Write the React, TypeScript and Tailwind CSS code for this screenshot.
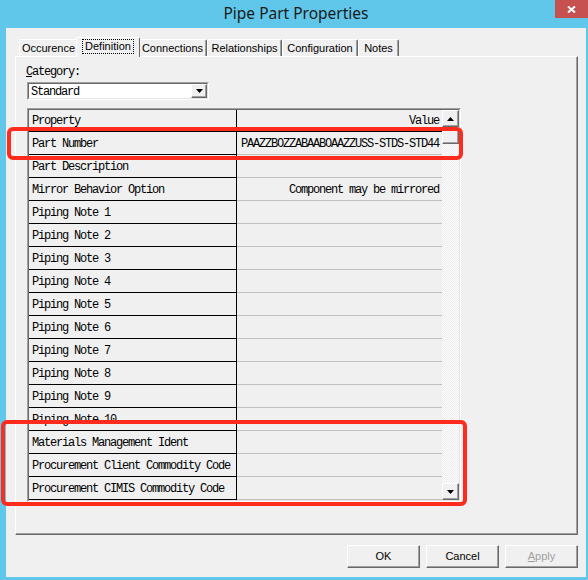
import React from 'react';

type PropRow = { name: string; value?: string };

const rows: PropRow[] = [
  { name: 'Part Number', value: 'PAAZZBOZZABAABOAAZZUSS-STDS-STD44' },
  { name: 'Part Description' },
  { name: 'Mirror Behavior Option', value: 'Component may be mirrored' },
  { name: 'Piping Note 1' },
  { name: 'Piping Note 2' },
  { name: 'Piping Note 3' },
  { name: 'Piping Note 4' },
  { name: 'Piping Note 5' },
  { name: 'Piping Note 6' },
  { name: 'Piping Note 7' },
  { name: 'Piping Note 8' },
  { name: 'Piping Note 9' },
  { name: 'Piping Note 10' },
  { name: 'Materials Management Ident' },
  { name: 'Procurement Client Commodity Code' },
  { name: 'Procurement CIMIS Commodity Code' },
  { name: '' },
];

const tabs = [
  { label: 'Occurence', w: 'w-[59px]' },
  { label: 'Definition', w: 'w-[64px]', active: true },
  { label: 'Connections', w: 'w-[69px]' },
  { label: 'Relationships', w: 'w-[75px]' },
  { label: 'Configuration', w: 'w-[76px]' },
  { label: 'Notes', w: 'w-[41px]' },
];

const ui = "font-['Liberation_Sans',Arial,sans-serif] text-[11px]";
const mono = "font-['Liberation_Mono','Courier_New',monospace] text-[12px] tracking-[-1.2px]";
const raised =
  'bg-[#f0f0f0] border border-t-white border-l-white border-r-[#696969] border-b-[#696969] shadow-[inset_-1px_-1px_0_#a0a0a0]';

const Arrow: React.FC<{ down?: boolean }> = ({ down }) => (
  <svg width="7" height="4" viewBox="0 0 7 4">
    <polygon points={down ? '0,0 7,0 3.5,4' : '0,4 7,4 3.5,0'} fill="#000" />
  </svg>
);

const DialogButton: React.FC<{ children: React.ReactNode; disabled?: boolean }> = ({ children, disabled }) => (
  <button
    className={`w-[73px] h-[23px] flex items-center justify-center ${raised} ${ui} ${disabled ? 'text-[#a0a0a0]' : 'text-black'}`}
  >
    {children}
  </button>
);

export default function App() {
  return (
    <div className="relative w-[588px] h-[580px] bg-[#61c7ea] overflow-hidden">
      {/* title bar */}
      <div className="relative h-[28px] flex items-center justify-center">
        <span className="font-['Noto_Sans',sans-serif] text-[15.5px] text-[#1a1a1a] pl-[4px]">Pipe Part Properties</span>
        <div className="absolute top-0 right-0 w-[33px] h-[18px] bg-[#c75050] flex items-center justify-center">
          <svg width="9" height="7" viewBox="0 0 9 7">
            <path d="M1 0.5 L8 6.5 M8 0.5 L1 6.5" stroke="#fff" strokeWidth="2" />
          </svg>
        </div>
      </div>

      {/* dialog body */}
      <div className="ml-[6px] mr-[2px] h-[549px] bg-[#f0f0f0] pt-[9px]">
        <div className="flex items-end h-[19px] pl-[13px]">
          {tabs.map((t) =>
            t.active ? (
              <div
                key={t.label}
                className={`${t.w} -mx-[2px] -mb-px h-[20px] relative z-10 bg-[#f0f0f0] border-t border-l border-white border-r border-r-[#696969] rounded-t-[2px] flex justify-center pt-[1px] ${ui}`}
              >
                <span className="h-[15px] leading-[13px] px-[2px] border border-dotted border-black">{t.label}</span>
              </div>
            ) : (
              <div
                key={t.label}
                className={`${t.w} h-[17px] bg-[#f0f0f0] border-t border-l border-white border-r border-r-[#696969] shadow-[inset_-1px_0_0_#a0a0a0] rounded-t-[2px] flex items-center justify-center pt-[1px] ${ui}`}
              >
                {t.label}
              </div>
            )
          )}
        </div>

        {/* tab page */}
        <div className="ml-[9px] w-[563px] h-[479px] border-t border-l border-white border-r border-b border-r-[#696969] border-b-[#696969] shadow-[inset_-1px_-1px_0_#a0a0a0] pt-[9px] pl-[10px]">
          <div className={`h-[12px] leading-[12px] ${mono}`}>
            <span className="underline underline-offset-1">C</span>ategory:
          </div>

          <div className="mt-[4px] ml-[1px] w-[182px] h-[18px] flex border border-t-[#a0a0a0] border-l-[#a0a0a0] border-r-white border-b-white">
            <div className="flex-1 flex border border-t-[#696969] border-l-[#696969] border-r-[#e3e3e3] border-b-[#e3e3e3] bg-white">
              <span className={`flex-1 pl-[2px] leading-[16px] ${mono}`}>Standard</span>
              <div className={`w-[16px] h-[14px] ${raised} flex items-center justify-center`}>
                <Arrow down />
              </div>
            </div>
          </div>

          {/* property grid */}
          <div className="mt-[8px] ml-[1px] w-[434px] h-[394px] border border-t-[#a0a0a0] border-l-[#a0a0a0] border-r-white border-b-white">
            <div className="h-full flex border border-t-[#696969] border-l-[#696969] border-r-[#e3e3e3] border-b-[#e3e3e3]">
              <div className={`w-[413px] overflow-hidden ${mono} text-black`}>
                <div className="flex h-[22px] border-b border-black">
                  <div className="w-[208px] border-r border-black pl-[3px] pt-[1px] flex items-center">Property</div>
                  <div className="flex-1 flex items-center justify-end pr-[3px] pt-[1px]">Value</div>
                </div>
                {rows.map((r, i) => (
                  <div key={i} className="flex h-[23px]">
                    <div className="w-[208px] border-r border-b border-black pl-[3px] pt-[1px] flex items-center whitespace-nowrap">
                      {r.name}
                    </div>
                    <div className="flex-1 border-b border-[#c0c0c0] flex items-center justify-end pr-[3px] pt-[1px] whitespace-nowrap">
                      {r.value}
                    </div>
                  </div>
                ))}
              </div>
              <div className="w-[17px] flex flex-col bg-[image:repeating-conic-gradient(#ffffff_0%_25%,#ebebeb_0%_50%)] bg-[length:2px_2px]">
                <div className={`h-[17px] ${raised} flex items-center justify-center`}>
                  <Arrow />
                </div>
                <div className={`mt-[3px] h-[14px] ${raised}`} />
                <div className="flex-1" />
                <div className={`h-[17px] ${raised} flex items-center justify-center`}>
                  <Arrow down />
                </div>
              </div>
            </div>
          </div>
        </div>

        <div className="mt-[10px] pr-[8px] flex justify-end gap-[6px]">
          <DialogButton>OK</DialogButton>
          <DialogButton>Cancel</DialogButton>
          <DialogButton disabled>
            <span className="underline underline-offset-1">A</span>pply
          </DialogButton>
        </div>
      </div>

      {/* red markup rectangles */}
      <div className="absolute left-[7px] top-[127px] w-[456px] h-[33px] border-[4px] border-[#ff2b1c] rounded-[6px]" />
      <div className="absolute left-[1px] top-[420px] w-[466px] h-[86px] border-[4px] border-[#ff2b1c] rounded-[6px]" />
    </div>
  );
}
